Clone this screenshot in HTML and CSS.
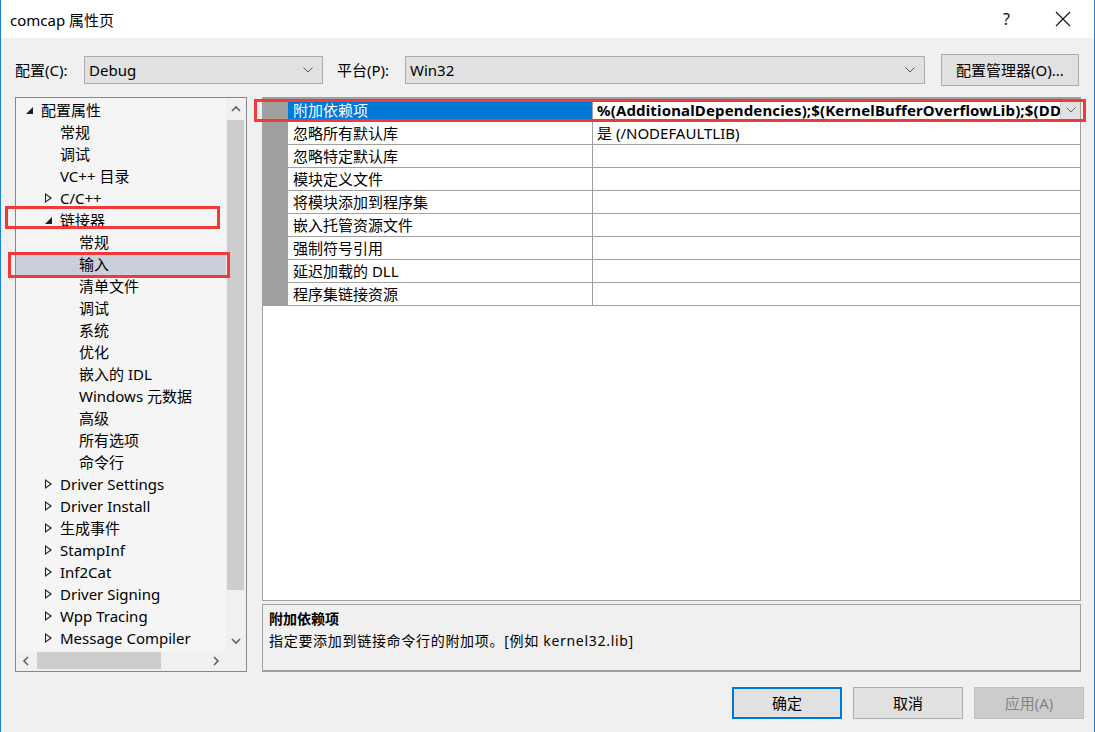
FILE: index.html
```html
<!DOCTYPE html>
<html lang="zh">
<head>
    <meta charset="UTF-8">
    <title>comcap 属性页</title>
    <link rel="stylesheet" href="styles.css">
</head>
<body>
<div class="window">
    <div class="titlebar">
        <span class="title">comcap 属性页</span>
        <span class="help">?</span>
        <svg class="close" width="16" height="16" viewBox="0 0 16 16"><path d="M1 1L15 15M15 1L1 15" stroke="#111" stroke-width="1.1" fill="none"/></svg>
    </div>

    <div class="content">
        <div class="toolbar">
            <span class="label lbl-config">配置(C):</span>
            <div class="select sel-config">
                <span>Debug</span>
                <svg class="chev" width="10" height="6" viewBox="0 0 10 6"><path d="M0.5 0.5L5 5L9.5 0.5" stroke="#555" fill="none"/></svg>
            </div>
            <span class="label lbl-platform">平台(P):</span>
            <div class="select sel-platform">
                <span>Win32</span>
                <svg class="chev" width="10" height="6" viewBox="0 0 10 6"><path d="M0.5 0.5L5 5L9.5 0.5" stroke="#555" fill="none"/></svg>
            </div>
            <button class="btn btn-manager">配置管理器(O)...</button>
        </div>

        <div class="main">
            <!-- 左侧树 -->
            <div class="tree">
                <div class="tree-body">
                    <div class="tree-rows">
                        <div class="node l0"><i class="tg open"></i>配置属性</div>
                        <div class="node l1"><i class="tg"></i>常规</div>
                        <div class="node l1"><i class="tg"></i>调试</div>
                        <div class="node l1"><i class="tg"></i>VC++ 目录</div>
                        <div class="node l1"><i class="tg closed"></i>C/C++</div>
                        <div class="node l1 mark"><i class="tg open"></i>链接器</div>
                        <div class="node l2"><i class="tg"></i>常规</div>
                        <div class="node l2 selected mark2"><i class="tg"></i>输入</div>
                        <div class="node l2"><i class="tg"></i>清单文件</div>
                        <div class="node l2"><i class="tg"></i>调试</div>
                        <div class="node l2"><i class="tg"></i>系统</div>
                        <div class="node l2"><i class="tg"></i>优化</div>
                        <div class="node l2"><i class="tg"></i>嵌入的 IDL</div>
                        <div class="node l2"><i class="tg"></i>Windows 元数据</div>
                        <div class="node l2"><i class="tg"></i>高级</div>
                        <div class="node l2"><i class="tg"></i>所有选项</div>
                        <div class="node l2"><i class="tg"></i>命令行</div>
                        <div class="node l1"><i class="tg closed"></i>Driver Settings</div>
                        <div class="node l1"><i class="tg closed"></i>Driver Install</div>
                        <div class="node l1"><i class="tg closed"></i>生成事件</div>
                        <div class="node l1"><i class="tg closed"></i>StampInf</div>
                        <div class="node l1"><i class="tg closed"></i>Inf2Cat</div>
                        <div class="node l1"><i class="tg closed"></i>Driver Signing</div>
                        <div class="node l1"><i class="tg closed"></i>Wpp Tracing</div>
                        <div class="node l1"><i class="tg closed"></i>Message Compiler</div>
                    </div>
                    <div class="vscroll">
                        <svg class="arrow" width="20" height="20" viewBox="0 0 20 20"><path d="M6 12L10 8L14 12" stroke="#606060" stroke-width="1.6" fill="none"/></svg>
                        <div class="vtrack"><div class="vthumb"></div></div>
                        <svg class="arrow" width="20" height="20" viewBox="0 0 20 20"><path d="M6 8L10 12L14 8" stroke="#606060" stroke-width="1.6" fill="none"/></svg>
                    </div>
                </div>
                <div class="hscroll">
                    <svg class="arrow" width="20" height="20" viewBox="0 0 20 20"><path d="M12 6L8 10L12 14" stroke="#606060" stroke-width="1.6" fill="none"/></svg>
                    <div class="htrack"><div class="hthumb"></div></div>
                    <svg class="arrow" width="20" height="20" viewBox="0 0 20 20"><path d="M8 6L12 10L8 14" stroke="#606060" stroke-width="1.6" fill="none"/></svg>
                    <div class="corner"></div>
                </div>
            </div>

            <!-- 右侧属性表 -->
            <div class="right">
                <div class="grid">
                    <div class="grid-rows">
                        <div class="row selected mark3">
                            <div class="gutter"></div>
                            <div class="name">附加依赖项</div>
                            <div class="value bold">
                                <span>%(AdditionalDependencies);$(KernelBufferOverflowLib);$(DD</span>
                                <div class="drop"><svg width="10" height="6" viewBox="0 0 10 6"><path d="M0.5 0.5L5 5L9.5 0.5" stroke="#666" fill="none"/></svg></div>
                            </div>
                        </div>
                        <div class="row"><div class="gutter"></div><div class="name">忽略所有默认库</div><div class="value"><span>是 (/NODEFAULTLIB)</span></div></div>
                        <div class="row"><div class="gutter"></div><div class="name">忽略特定默认库</div><div class="value"></div></div>
                        <div class="row"><div class="gutter"></div><div class="name">模块定义文件</div><div class="value"></div></div>
                        <div class="row"><div class="gutter"></div><div class="name">将模块添加到程序集</div><div class="value"></div></div>
                        <div class="row"><div class="gutter"></div><div class="name">嵌入托管资源文件</div><div class="value"></div></div>
                        <div class="row"><div class="gutter"></div><div class="name">强制符号引用</div><div class="value"></div></div>
                        <div class="row"><div class="gutter"></div><div class="name">延迟加载的 DLL</div><div class="value"></div></div>
                        <div class="row"><div class="gutter"></div><div class="name">程序集链接资源</div><div class="value"></div></div>
                    </div>
                </div>
                <div class="desc">
                    <div class="desc-title">附加依赖项</div>
                    <div class="desc-text">指定要添加到链接命令行的附加项。[例如 kernel32.lib]</div>
                </div>
            </div>
        </div>

        <div class="buttons">
            <button class="btn btn-ok">确定</button>
            <button class="btn">取消</button>
            <button class="btn btn-disabled">应用(A)</button>
        </div>
    </div>
</div>
</body>
</html>
```

FILE: styles.css
```css
body {
    margin: 0;
    padding: 0;
    font-family: "Noto Sans", "Noto Sans CJK SC", sans-serif;
    font-size: 15px;
    color: #000;
    background-color: #f0f0f0;
}

.window {
    width: 1095px;
    height: 732px;
    box-sizing: border-box;
    border-left: 1px solid #1883d7;
    border-right: 1px solid #1883d7;
    background-color: #f0f0f0;
    display: flex;
    flex-direction: column;
}

.titlebar {
    height: 38px;
    background-color: #fff;
    display: flex;
    align-items: center;
    padding-left: 9px;
}

.title {
    font-size: 15px;
    flex: 1;
    margin-top: 1px;
}

.help {
    font-size: 16px;
    color: #111;
    margin-right: 45px;
}

.close {
    margin-right: 23px;
}

.content {
    flex: 1;
    display: flex;
    flex-direction: column;
}

/* 顶部配置栏 */
.toolbar {
    display: flex;
    align-items: center;
    height: 32px;
    margin-top: 16px;
    padding-left: 14px;
}

.label {
    font-size: 15px;
    line-height: 20px;
}

.lbl-config {
    width: 69px;
}

.lbl-platform {
    width: 68px;
    padding-left: 14px;
}

.select {
    height: 28px;
    box-sizing: border-box;
    border: 1px solid #adadad;
    background-color: #e1e1e1;
    display: flex;
    align-items: center;
    justify-content: space-between;
    padding: 0 9px 0 4px;
    line-height: 20px;
}

.sel-config {
    width: 239px;
}

.sel-platform {
    width: 520px;
}

.btn {
    font-family: "Noto Sans", "Noto Sans CJK SC", sans-serif;
    font-size: 15px;
    background-color: #e1e1e1;
    border: 1px solid #adadad;
    color: #000;
    padding: 0;
    line-height: 20px;
}

.btn-manager {
    margin-left: 16px;
    width: 138px;
    height: 32px;
}

/* 主区域 */
.main {
    display: flex;
    margin-top: 11px;
    padding-left: 14px;
    gap: 15px;
    height: 575px;
}

.tree {
    width: 232px;
    box-sizing: border-box;
    border: 1px solid #828790;
    background-color: #f5f5f5;
    display: flex;
    flex-direction: column;
}

.tree-body {
    display: flex;
    flex: 1;
    padding-top: 1px;
    min-height: 0;
}

.tree-rows {
    flex: 1;
    min-width: 0;
}

.node {
    height: 22px;
    line-height: 22px;
    display: flex;
    align-items: center;
    white-space: nowrap;
    position: relative;
}

.node.l0 { padding-left: 9px; }
.node.l1 { padding-left: 28px; }
.node.l2 { padding-left: 47px; }

.node.selected {
    background-color: #cccedb;
}

.tg {
    width: 16px;
    height: 22px;
    flex-shrink: 0;
    position: relative;
}

.tg.open::after {
    content: "";
    position: absolute;
    left: 1px;
    top: 8px;
    border-style: solid;
    border-width: 0 0 7px 7px;
    border-color: transparent transparent #1e1e1e transparent;
}

.tg.closed::after {
    content: "";
    position: absolute;
    left: 1px;
    top: 6px;
    width: 0;
    height: 0;
    border-style: solid;
    border-width: 5px 0 5px 7px;
    border-color: transparent transparent transparent #1e1e1e;
}

.tg.closed::before {
    content: "";
    position: absolute;
    left: 2px;
    top: 8px;
    width: 0;
    height: 0;
    border-style: solid;
    border-width: 3px 0 3px 4px;
    border-color: transparent transparent transparent #f5f5f5;
    z-index: 1;
}

/* 红色标记框 */
.mark::before {
    content: "";
    position: absolute;
    left: -11px;
    top: -3px;
    width: 209px;
    height: 17px;
    border: 3px solid #ee3a3a;
    z-index: 2;
}

.mark2::before {
    content: "";
    position: absolute;
    left: -8px;
    top: -1px;
    width: 216px;
    height: 20px;
    border: 3px solid #ee3a3a;
    z-index: 2;
}

.vscroll {
    width: 20px;
    display: flex;
    flex-direction: column;
    background-color: #f0f0f0;
}

.vtrack {
    flex: 1;
    padding-top: 1px;
}

.vthumb {
    margin: 0 2px 0 1px;
    height: 470px;
    background-color: #cdcdcd;
}

.arrow {
    display: block;
    flex-shrink: 0;
}

.hscroll {
    height: 20px;
    display: flex;
    background-color: #f0f0f0;
}

.htrack {
    flex: 1;
    padding-top: 1px;
}

.hthumb {
    margin-left: 1px;
    width: 124px;
    height: 17px;
    background-color: #cdcdcd;
}

.corner {
    width: 20px;
    background-color: #f0f0f0;
}

/* 属性表 */
.right {
    width: 819px;
    display: flex;
    flex-direction: column;
    gap: 3px;
}

.grid {
    height: 504px;
    box-sizing: border-box;
    border: 1px solid #a0a0a0;
    border-top-width: 2px;
    background-color: #fff;
}

.row {
    display: flex;
    height: 23px;
    box-sizing: border-box;
    border-bottom: 1px solid #a0a0a0;
    line-height: 22px;
    position: relative;
}

.gutter {
    width: 25px;
    background-color: #a0a0a0;
    flex-shrink: 0;
}

.name {
    width: 299px;
    padding-left: 5px;
    border-right: 1px solid #a0a0a0;
    flex-shrink: 0;
    white-space: nowrap;
}

.value {
    flex: 1;
    padding-left: 4px;
    white-space: nowrap;
    overflow: hidden;
    display: flex;
    position: relative;
}

.value.bold {
    font-weight: bold;
    letter-spacing: 0.15px;
}

.row.selected .name {
    background-color: #0078d7;
    color: #fff;
}

.drop {
    position: absolute;
    right: 0;
    top: 1px;
    width: 19px;
    height: 20px;
    background-color: #e1e1e1;
    border-left: 1px solid #d0d0d0;
    display: flex;
    align-items: center;
    justify-content: center;
}

.mark3::after {
    content: "";
    position: absolute;
    left: -9px;
    top: 0;
    width: 826px;
    height: 17px;
    border: 3px solid #ee3a3a;
}

.desc {
    height: 68px;
    box-sizing: border-box;
    border: 1px solid #a0a0a0;
    border-bottom-width: 2px;
    background-color: #f0f0f0;
    padding: 3px 6px;
    font-size: 14px;
    line-height: 22px;
}

.desc-title {
    font-weight: bold;
}

.desc-text {
    letter-spacing: 0.7px;
}

/* 底部按钮 */
.buttons {
    display: flex;
    justify-content: flex-end;
    gap: 11px;
    margin-top: 15px;
    padding-right: 10px;
}

.buttons .btn {
    width: 110px;
    height: 32px;
}

.btn-ok {
    border: 2px solid #0078d7 !important;
}

.btn-disabled {
    background-color: #cccccc !important;
    border-color: #bfbfbf !important;
    color: #838383 !important;
}
```
